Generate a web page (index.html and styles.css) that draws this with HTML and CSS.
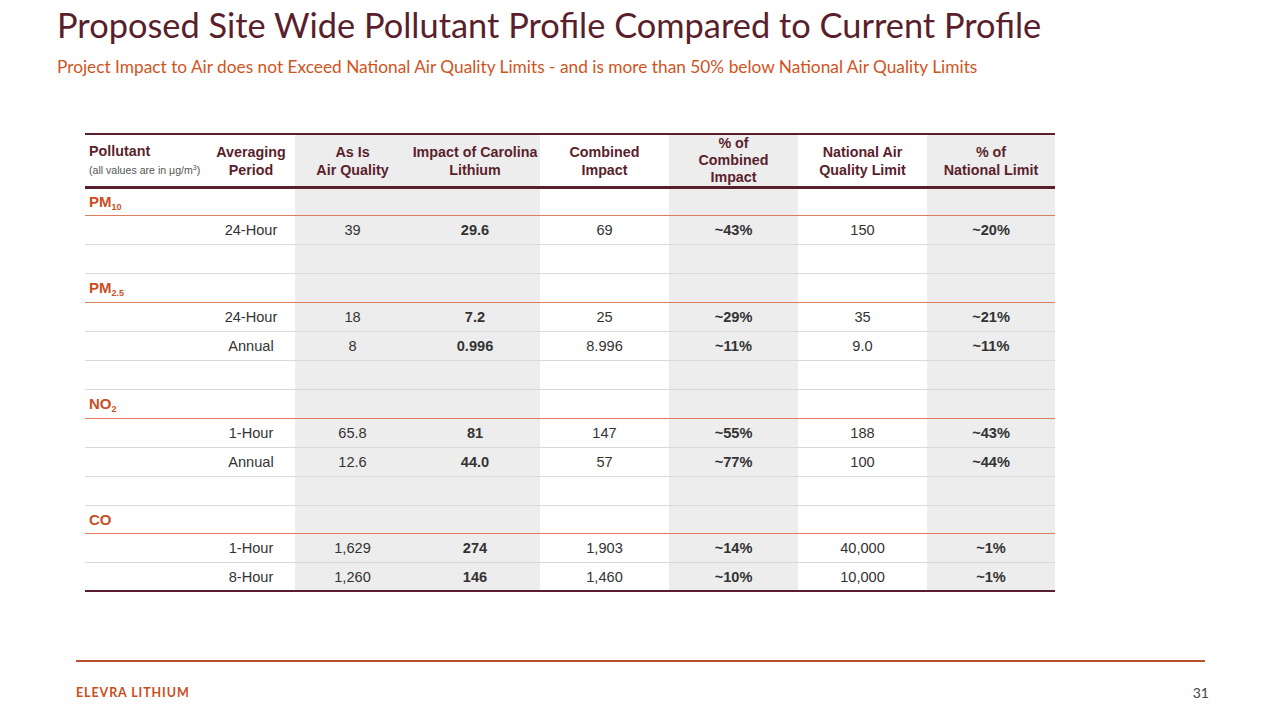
FILE: index.html
```html
<!DOCTYPE html>
<html>
<head>
<meta charset="utf-8">
<link rel="stylesheet" href="styles.css">
</head>
<body>
<div class="slide">
  <header class="head">
    <h1 class="title">Proposed Site Wide Pollutant Profile Compared to Current Profile</h1>
    <p class="subtitle">Project Impact to Air does not Exceed National Air Quality Limits - and is more than 50% below National Air Quality Limits</p>
  </header>
  <div class="table-wrap">
    <table class="grid">
      <colgroup>
        <col class="c-pol"><col class="c-avg"><col class="c-asis shade"><col class="c-imp shade"><col class="c-comb"><col class="c-pcomb shade"><col class="c-nat"><col class="c-pnat shade">
      </colgroup>
      <thead>
        <tr>
          <th class="left">Pollutant<span class="units">(all values are in µg/m<sup>3</sup>)</span></th>
          <th>Averaging<br>Period</th>
          <th>As Is<br>Air Quality</th>
          <th>Impact of Carolina<br>Lithium</th>
          <th>Combined<br>Impact</th>
          <th class="tight">% of<br>Combined<br>Impact</th>
          <th>National Air<br>Quality Limit</th>
          <th>% of<br>National Limit</th>
        </tr>
      </thead>
      <tbody>
        <tr class="cat first"><td class="left">PM<sub>10</sub></td><td></td><td></td><td></td><td></td><td></td><td></td><td></td></tr>
        <tr><td></td><td>24-Hour</td><td>39</td><td class="b">29.6</td><td>69</td><td class="b">~43%</td><td>150</td><td class="b">~20%</td></tr>
        <tr class="gap"><td></td><td></td><td></td><td></td><td></td><td></td><td></td><td></td></tr>
        <tr class="cat"><td class="left">PM<sub>2.5</sub></td><td></td><td></td><td></td><td></td><td></td><td></td><td></td></tr>
        <tr><td></td><td>24-Hour</td><td>18</td><td class="b">7.2</td><td>25</td><td class="b">~29%</td><td>35</td><td class="b">~21%</td></tr>
        <tr><td></td><td>Annual</td><td>8</td><td class="b">0.996</td><td>8.996</td><td class="b">~11%</td><td>9.0</td><td class="b">~11%</td></tr>
        <tr class="gap"><td></td><td></td><td></td><td></td><td></td><td></td><td></td><td></td></tr>
        <tr class="cat"><td class="left">NO<sub>2</sub></td><td></td><td></td><td></td><td></td><td></td><td></td><td></td></tr>
        <tr><td></td><td>1-Hour</td><td>65.8</td><td class="b">81</td><td>147</td><td class="b">~55%</td><td>188</td><td class="b">~43%</td></tr>
        <tr><td></td><td>Annual</td><td>12.6</td><td class="b">44.0</td><td>57</td><td class="b">~77%</td><td>100</td><td class="b">~44%</td></tr>
        <tr class="gap"><td></td><td></td><td></td><td></td><td></td><td></td><td></td><td></td></tr>
        <tr class="cat short"><td class="left">CO</td><td></td><td></td><td></td><td></td><td></td><td></td><td></td></tr>
        <tr><td></td><td>1-Hour</td><td>1,629</td><td class="b">274</td><td>1,903</td><td class="b">~14%</td><td>40,000</td><td class="b">~1%</td></tr>
        <tr class="last"><td></td><td>8-Hour</td><td>1,260</td><td class="b">146</td><td>1,460</td><td class="b">~10%</td><td>10,000</td><td class="b">~1%</td></tr>
      </tbody>
    </table>
  </div>
  <footer class="foot">
    <div class="rule"></div>
    <div class="foot-row">
      <span class="brand">ELEVRA LITHIUM</span>
      <span class="page">31</span>
    </div>
  </footer>
</div>
</body>
</html>
```
FILE: styles.css
```css
html, body {
  margin: 0;
  padding: 0;
  background: #ffffff;
}
.slide {
  width: 1280px;
  height: 720px;
  position: relative;
  overflow: hidden;
  background: #ffffff;
  font-family: "Liberation Sans", Arial, sans-serif;
}
.head {
  padding: 4px 0 0 57px;
}
.title {
  margin: 0;
  font-family: Lato, "Open Sans", sans-serif;
  font-weight: 400;
  font-size: 34.4px;
  line-height: 42px;
  color: #5a1f2c;
  white-space: nowrap;
}
.subtitle {
  margin: 10px 0 0 0;
  font-family: Lato, "Open Sans", sans-serif;
  font-size: 17.3px;
  line-height: 22px;
  color: #d0541d;
  white-space: nowrap;
}
.table-wrap {
  padding: 55px 0 0 85px;
}
.grid {
  border-collapse: collapse;
  table-layout: fixed;
  width: 970px;
  font-size: 14.6px;
  color: #333333;
}
.c-pol { width: 122px; }
.c-avg { width: 88px; }
.c-asis { width: 115px; }
.c-imp { width: 130px; }
.c-comb { width: 129px; }
.c-pcomb { width: 129px; }
.c-nat { width: 129px; }
.c-pnat { width: 128px; }
col.shade { background: #ededed; }
.grid th {
  height: 50px;
  padding: 0;
  border-top: 2px solid #5a1f2c;
  border-bottom: 3px solid #5a1f2c;
  font-weight: 700;
  font-size: 14.3px;
  line-height: 18px;
  color: #5a1f2c;
  text-align: center;
  vertical-align: middle;
  background: #ffffff;
}
.grid th:nth-child(3), .grid th:nth-child(4), .grid th:nth-child(6), .grid th:nth-child(8) {
  background: #ededed;
}
.grid th.tight { line-height: 17px; }
.grid th.left {
  text-align: left;
  padding-left: 4px;
}
.units {
  display: block;
  font-weight: 400;
  font-size: 10.6px;
  color: #555555;
  line-height: 20px;
  white-space: nowrap;
}
.units sup { font-size: 7px; vertical-align: 4px; line-height: 0; }
.grid td {
  height: 28px;
  padding: 0;
  border-bottom: 1px solid #d9d9d9;
  text-align: center;
  vertical-align: middle;
  line-height: 16px;
}
.grid tr.first td { height: 26px; }
.grid tr.short td { height: 27px; }
.grid tr.cat td { border-bottom: 1px solid #dc7d5c; }
.grid tr.last td { height: 27px; border-bottom: 2px solid #5a1f2c; }
.grid td.left {
  text-align: left;
  padding-left: 4px;
  font-weight: 700;
  color: #c9501f;
  font-size: 15px;
}
.grid td.left sub { font-size: 9px; vertical-align: -3px; line-height: 0; }
.grid td.b { font-weight: 700; }
.foot {
  position: absolute;
  left: 76px;
  top: 660px;
  width: 1129px;
}
.rule {
  height: 2px;
  background: #b9532b;
}
.foot-row {
  display: flex;
  justify-content: space-between;
  align-items: center;
  margin-top: 22px;
}
.brand {
  font-family: Lato, "Open Sans", sans-serif;
  font-weight: 700;
  font-size: 12.5px;
  color: #c8501c;
  letter-spacing: 0.9px;
}
.page {
  font-family: Lato, "Open Sans", sans-serif;
  font-size: 14px;
  color: #444444;
  margin-right: -4px;
}
```
